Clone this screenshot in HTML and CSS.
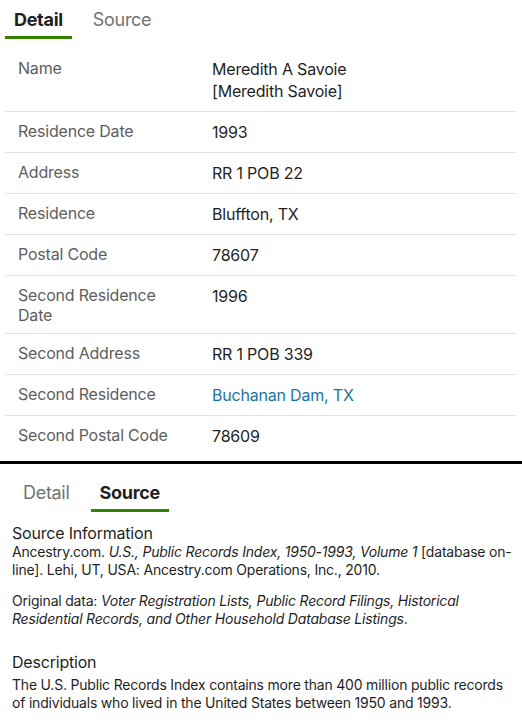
FILE: index.html
```html
<!DOCTYPE html>
<html lang="en">
<head>
<meta charset="utf-8">
<title>Record Detail</title>
<link rel="stylesheet" href="styles.css">
</head>
<body>
<section class="panel panel-detail">
  <nav class="tabs">
    <span class="tab active">Detail</span>
    <span class="tab">Source</span>
  </nav>
  <table class="facts">
    <tbody>
      <tr><th>Name</th><td>Meredith A Savoie<br>[Meredith Savoie]</td></tr>
      <tr><th>Residence Date</th><td>1993</td></tr>
      <tr><th>Address</th><td>RR 1 POB 22</td></tr>
      <tr><th>Residence</th><td>Bluffton, TX</td></tr>
      <tr><th>Postal Code</th><td>78607</td></tr>
      <tr><th>Second Residence Date</th><td>1996</td></tr>
      <tr><th>Second Address</th><td>RR 1 POB 339</td></tr>
      <tr><th>Second Residence</th><td><a class="link" href="#">Buchanan Dam, TX</a></td></tr>
      <tr class="last"><th>Second Postal Code</th><td>78609</td></tr>
    </tbody>
  </table>
</section>
<div class="divider"></div>
<section class="panel panel-source">
  <nav class="tabs">
    <span class="tab">Detail</span>
    <span class="tab active">Source</span>
  </nav>
  <div class="source-body">
    <h3 class="heading">Source Information</h3>
    <p class="text">Ancestry.com. <em>U.S., Public Records Index, 1950-1993, Volume 1</em> [database on-line]. Lehi, UT, USA: Ancestry.com Operations, Inc., 2010.</p>
    <p class="text">Original data: <em>Voter Registration Lists, Public Record Filings, Historical Residential Records, and Other Household Database Listings</em>.</p>
    <h3 class="heading heading-desc">Description</h3>
    <p class="text">The U.S. Public Records Index contains more than 400 million public records of individuals who lived in the United States between 1950 and 1993.</p>
  </div>
</section>
</body>
</html>
```
FILE: styles.css
```css
* { box-sizing: border-box; }
body {
  margin: 0;
  font-family: Inter, "Noto Sans", "Liberation Sans", sans-serif;
  color: #1f1f1f;
  background: #fff;
  letter-spacing: -0.2px;
}
.tabs {
  display: flex;
  gap: 12px;
}
.tab {
  padding: 8px 9px 4px;
  font-size: 18px;
  line-height: 24px;
  letter-spacing: -0.3px;
  color: #737373;
  border-bottom: 3px solid transparent;
}
.tab.active {
  font-weight: 700;
  color: #1f1f1f;
  border-bottom-color: #338300;
}
.panel-detail .tabs { padding-left: 5px; }
.facts {
  margin: 10px 6px 0 5px;
  width: 511px;
  border-collapse: collapse;
  font-size: 16px;
}
.facts th, .facts td {
  padding: 9px 0;
  vertical-align: top;
  text-align: left;
  border-bottom: 1px solid #e2e2e2;
}
.facts tr.last th, .facts tr.last td { border-bottom: none; }
.facts th {
  font-weight: 400;
  color: #5e5e5e;
  line-height: 19.5px;
  width: 207px;
  padding: 10px 20px 8px 13px;
}
.facts td {
  color: #1f1f1f;
  line-height: 22px;
}
.link { color: #1a75a0; text-decoration: none; }
.divider {
  height: 3px;
  background: #000;
  margin-top: 5px;
}
.panel-source { padding: 9px 0 0 14px; }
.source-body {
  margin-left: -2px;
  padding-top: 11px;
  padding-right: 6px;
}
.heading {
  margin: 0;
  font-size: 16px;
  line-height: 20px;
  font-weight: 400;
  color: #1f1f1f;
}
.heading-desc { margin: 24px 0 4px; }
.text {
  margin: 0 0 13px;
  font-size: 14px;
  line-height: 18px;
  color: #1f1f1f;
}
.text em { font-style: italic; }
```
